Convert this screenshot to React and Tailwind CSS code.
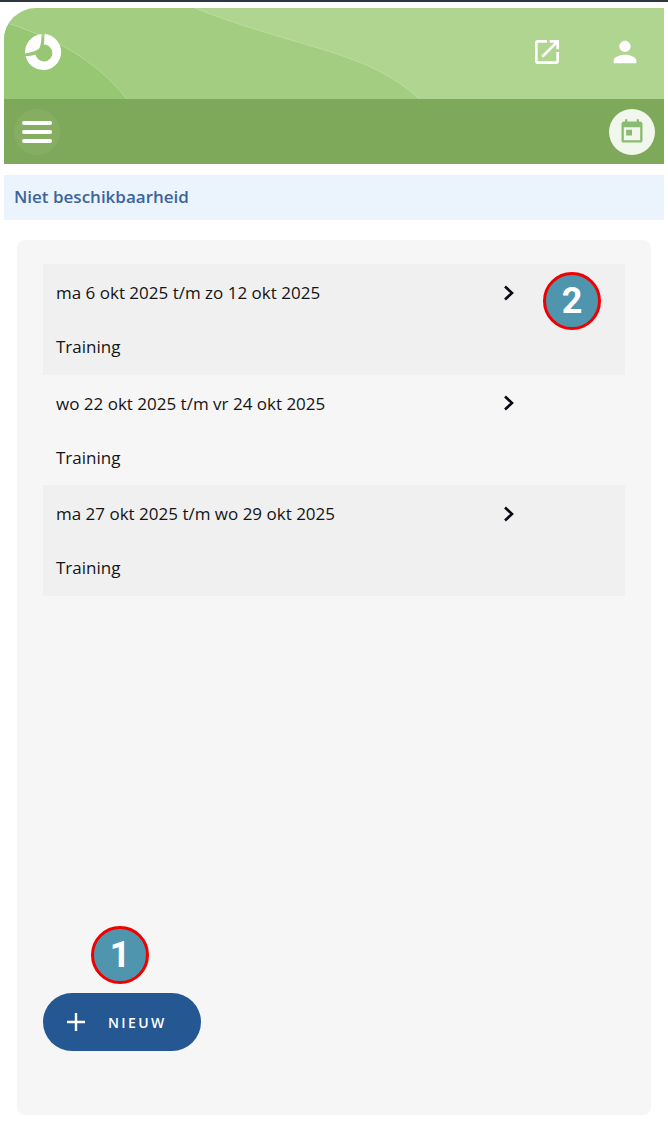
import React from 'react';

const rows = [
  { label: 'ma 6 okt 2025 t/m zo 12 okt 2025', shaded: true },
  { label: 'wo 22 okt 2025 t/m vr 24 okt 2025', shaded: false },
  { label: 'ma 27 okt 2025 t/m wo 29 okt 2025', shaded: true },
];

function Badge({ n, className }) {
  return (
    <div
      className={`absolute w-[58px] h-[58px] rounded-full bg-[#4f95ae] border-[3px] border-[#f00000] flex items-center justify-center text-white text-[36px] font-bold leading-none font-['Roboto',sans-serif] ${className}`}
    >
      {n}
    </div>
  );
}

function HeaderWaves() {
  return (
    <svg className="absolute inset-0 w-full h-full" viewBox="0 0 660 91" preserveAspectRatio="none">
      <rect width="660" height="91" fill="#a3cd80" />
      <path d="M0 14C50 30 90 50 123 91L0 91Z" fill="#98c774" />
      <path d="M0 14C50 30 90 50 123 91" fill="none" stroke="#b5d89a" strokeWidth="1" />
      <path d="M191 0C240 20 300 35 330 45C370 58 395 72 415 91L660 91L660 0Z" fill="#b0d590" />
      <path d="M191 0C240 20 300 35 330 45C370 58 395 72 415 91" fill="none" stroke="#bddc9f" strokeWidth="1" />
    </svg>
  );
}

function Logo() {
  return (
    <svg width="38" height="38" viewBox="0 0 38 38" className="block">
      <path d="M20.5 1.1A18 18 0 1 1 1.6 23C5 23 8.5 22.5 11.5 21.5A8.5 8.5 0 1 0 20 11.5Z" fill="#fff" />
      <path d="M17.5 1.1A18 18 0 0 0 1.1 20.5C6 19.5 12 18.5 15.5 15C17 12 17.5 7 17.5 1.1Z" fill="#fff" />
    </svg>
  );
}

export default function App() {
  return (
    <div className="relative w-[668px] h-[1125px] bg-white overflow-hidden font-['Open_Sans',sans-serif] text-[#141414]">
      <div className="h-[2px] bg-[#2f3640]" />

      <header className="mx-1 mt-1.5">
        <div className="relative h-[91px] rounded-tl-[32px] overflow-hidden">
          <HeaderWaves />
          <div className="relative h-full flex items-start pt-[25px] pl-[20px] pr-[22px]">
            <Logo />
            <div className="ml-auto flex items-center gap-[45px] mt-[2px]">
              <svg width="32" height="32" viewBox="0 0 24 24" fill="#fff">
                <path d="M19 19H5V5h7V3H5c-1.11 0-2 .9-2 2v14c0 1.1.89 2 2 2h14c1.1 0 2-.9 2-2v-7h-2v7zM14 3v2h3.59l-9.83 9.83 1.41 1.41L19 6.41V10h2V3h-7z" />
              </svg>
              <svg width="34" height="34" viewBox="0 0 24 24" fill="#fff">
                <path d="M12 12c2.21 0 4-1.79 4-4s-1.79-4-4-4-4 1.79-4 4 1.79 4 4 4zm0 2c-2.67 0-8 1.34-8 4v2h16v-2c0-2.66-5.33-4-8-4z" />
              </svg>
            </div>
          </div>
        </div>
        <div className="h-[65px] bg-[#7fa95a] flex items-center justify-between pl-[10px] pr-[9px]">
          <button className="w-[46px] h-[46px] rounded-full bg-[#86ae63] flex flex-col items-center justify-center gap-[5px]">
            <span className="block w-[30px] h-[4px] rounded-full bg-white" />
            <span className="block w-[30px] h-[4px] rounded-full bg-white" />
            <span className="block w-[30px] h-[4px] rounded-full bg-white" />
          </button>
          <button className="w-[46px] h-[46px] rounded-full bg-[#f2f7ee] flex items-center justify-center">
            <svg width="28" height="28" viewBox="0 0 24 24" fill="#8abb72">
              <path d="M19 3h-1V1h-2v2H8V1H6v2H5c-1.11 0-1.99.9-1.99 2L3 19c0 1.1.89 2 2 2h14c1.1 0 2-.9 2-2V5c0-1.1-.9-2-2-2zm0 16H5V8h14v11zM7 10h5v5H7z" />
            </svg>
          </button>
        </div>
      </header>

      <div className="mx-1 mt-[11px] h-[45px] bg-[#ebf3fc] flex items-center pl-[10px] pb-[2px] text-[17px] font-semibold text-[#3a659c]">
        Niet beschikbaarheid
      </div>

      <main className="mx-[17px] mt-5 h-[875px] rounded-[8px] bg-[#f6f6f6] pt-6 px-[26px] flex flex-col">
        <div className="flex flex-col">
          {rows.map((row) => (
            <div
              key={row.label}
              className={`h-[110.5px] pl-[13px] pt-[17px] text-[17px] leading-[23px] ${row.shaded ? 'bg-[#f0f0f0]' : ''}`}
            >
              <div className="flex items-center w-[460px] justify-between">
                <span>{row.label}</span>
                <svg width="14" height="18" viewBox="0 0 14 18" fill="none" stroke="#0a0a14" strokeWidth="2.6">
                  <path d="M3 2.5L10 9L3 15.5" />
                </svg>
              </div>
              <div className="mt-[31px]">Training</div>
            </div>
          ))}
        </div>
        <button className="mt-auto mb-[64px] w-[158px] h-[58px] rounded-full bg-[#255792] flex items-center pl-[21px] text-white">
          <svg width="24" height="24" viewBox="0 0 24 24" fill="none" stroke="#fff" strokeWidth="2.4">
            <path d="M12 3V21M3 12H21" />
          </svg>
          <span className="ml-[20px] text-[14px] font-semibold tracking-[2.4px]">NIEUW</span>
        </button>
      </main>

      <Badge n="1" className="left-[91px] top-[926px]" />
      <Badge n="2" className="left-[543px] top-[272px]" />
    </div>
  );
}
